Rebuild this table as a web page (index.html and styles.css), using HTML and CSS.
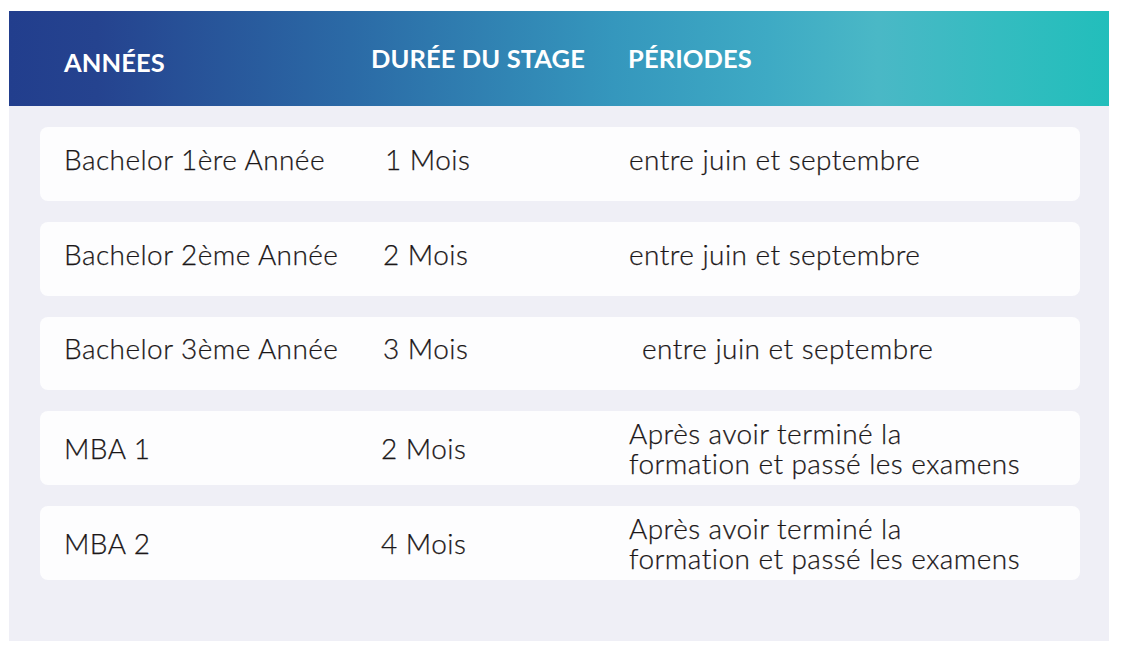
FILE: index.html
```html
<!DOCTYPE html>
<html lang="fr">
<head>
<meta charset="utf-8">
<title>Stages</title>
<link rel="stylesheet" href="styles.css">
</head>
<body>
<div class="table">
  <div class="head">
    <div class="h h1">ANNÉES</div>
    <div class="h h2">DURÉE DU STAGE</div>
    <div class="h h3">PÉRIODES</div>
  </div>
  <div class="panel">
    <div class="row single">
      <div class="c1">Bachelor 1ère Année</div>
      <div class="c2 nudge">1 Mois</div>
      <div class="c3">entre juin et septembre</div>
    </div>
    <div class="row single">
      <div class="c1">Bachelor 2ème Année</div>
      <div class="c2">2 Mois</div>
      <div class="c3">entre juin et septembre</div>
    </div>
    <div class="row single">
      <div class="c1">Bachelor 3ème Année</div>
      <div class="c2">3 Mois</div>
      <div class="c3 indent">entre juin et septembre</div>
    </div>
    <div class="row">
      <div class="c1">MBA 1</div>
      <div class="c2 back">2 Mois</div>
      <div class="c3">Après avoir terminé la<br>formation et passé les examens</div>
    </div>
    <div class="row">
      <div class="c1">MBA 2</div>
      <div class="c2 back">4 Mois</div>
      <div class="c3">Après avoir terminé la<br>formation et passé les examens</div>
    </div>
  </div>
</div>
</body>
</html>
```
FILE: styles.css
```css
html, body {
  margin: 0;
  padding: 0;
  background: #ffffff;
}
body {
  padding: 11px 13px 0 9px;
  font-family: "Lato", "Noto Sans", sans-serif;
}
.table {
  width: 1100px;
}
.head {
  height: 95px;
  display: grid;
  grid-template-columns: 307px 257px 1fr;
  align-items: center;
  padding-left: 55px;
  background: linear-gradient(90deg, #223e8d 0%, #25438f 8%, #2b6aa6 31%, #3597bd 55%, #3eaac4 69%, #4ab8c6 79%, #34bcc0 90%, #22bebb 100%);
  color: #ffffff;
  font-weight: 700;
  font-size: 25.5px;
  letter-spacing: 0.1px;
}
.h1 { padding-top: 6px; }
.h2, .h3 { margin-top: -1px; }
.panel {
  background: #efeff6;
  padding: 21px 29px 61px 31px;
  display: flex;
  flex-direction: column;
  gap: 21px;
}
.row {
  background: #fdfdfe;
  border-radius: 8px;
  height: 73.75px;
  box-sizing: border-box;
  display: grid;
  grid-template-columns: 319px 246px 1fr;
  align-items: center;
  padding-left: 24px;
  color: #1b1718;
  font-size: 28px;
  line-height: 30px;
  font-weight: 300;
  letter-spacing: 0.45px;
  -webkit-text-stroke: 0.25px #1b1718;
}
.row.single { padding-bottom: 10px; }
.nudge { padding-left: 2px; }
.back { margin-left: -2px; }
.indent { padding-left: 13px; }
```
